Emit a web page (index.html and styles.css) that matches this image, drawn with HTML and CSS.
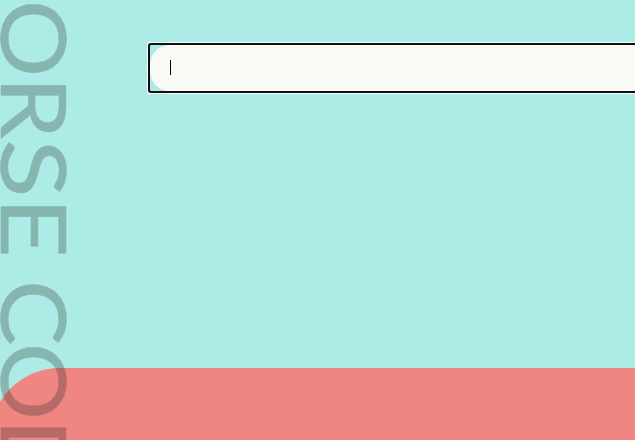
FILE: index.html
```
<!DOCTYPE html>
<html lang="en">
<head>
<meta charset="utf-8">
<title>Morse Code</title>
<link rel="stylesheet" href="styles.css">
</head>
<body>
<main class="page">
  <div class="field"><div class="field-fill"><span class="caret"></span></div></div>
  <section class="panel"></section>
  <svg class="title" width="80" height="440" viewBox="0 0 80 440">
    <g transform="translate(1.3 0) rotate(90)">
      <text transform="translate(-.2 0) scale(1.07 1)">O</text>
      <text transform="translate(76.4 0) scale(1.1 1)">R</text>
      <text transform="translate(139 0) scale(1.2 1)">S</text>
      <text transform="translate(196.8 0) scale(1.17 1)">E</text>
      <text transform="translate(279.7 0) scale(1.09 1)">C</text>
      <text transform="translate(342.8 0) scale(1.07 1)">O</text>
      <text transform="translate(419 0) scale(1.07 1)">D</text>
    </g>
  </svg>
</main>
</body>
</html>
```
FILE: styles.css
```
body {
  margin: 0;
  background: #adece6;
}
.page {
  position: relative;
  box-sizing: border-box;
  height: 440px;
  padding-top: 45px;
  overflow: hidden;
}
.field {
  width: 600px;
  height: 46px;
  margin-left: 150px;
  border-radius: 1px;
  box-shadow: 0 0 0 2px #101010, 0 0 0 3px #fff;
}
.field-fill {
  display: flex;
  align-items: center;
  box-sizing: border-box;
  height: 46px;
  padding: 0 0 2px 20px;
  border-radius: 20px;
  background: #fafaf5;
}
.caret {
  width: 1px;
  height: 15px;
  background: #000;
}
.panel {
  height: 200px;
  margin: 277px -80px 0 -10px;
  border-radius: 70px;
  background: #ef8682;
}
.title {
  position: absolute;
  top: 0;
  left: 0;
  font-family: Lato, sans-serif;
  font-size: 90.5px;
  fill: #292929;
  stroke: #292929;
  stroke-width: .5;
  opacity: .28;
}
```
